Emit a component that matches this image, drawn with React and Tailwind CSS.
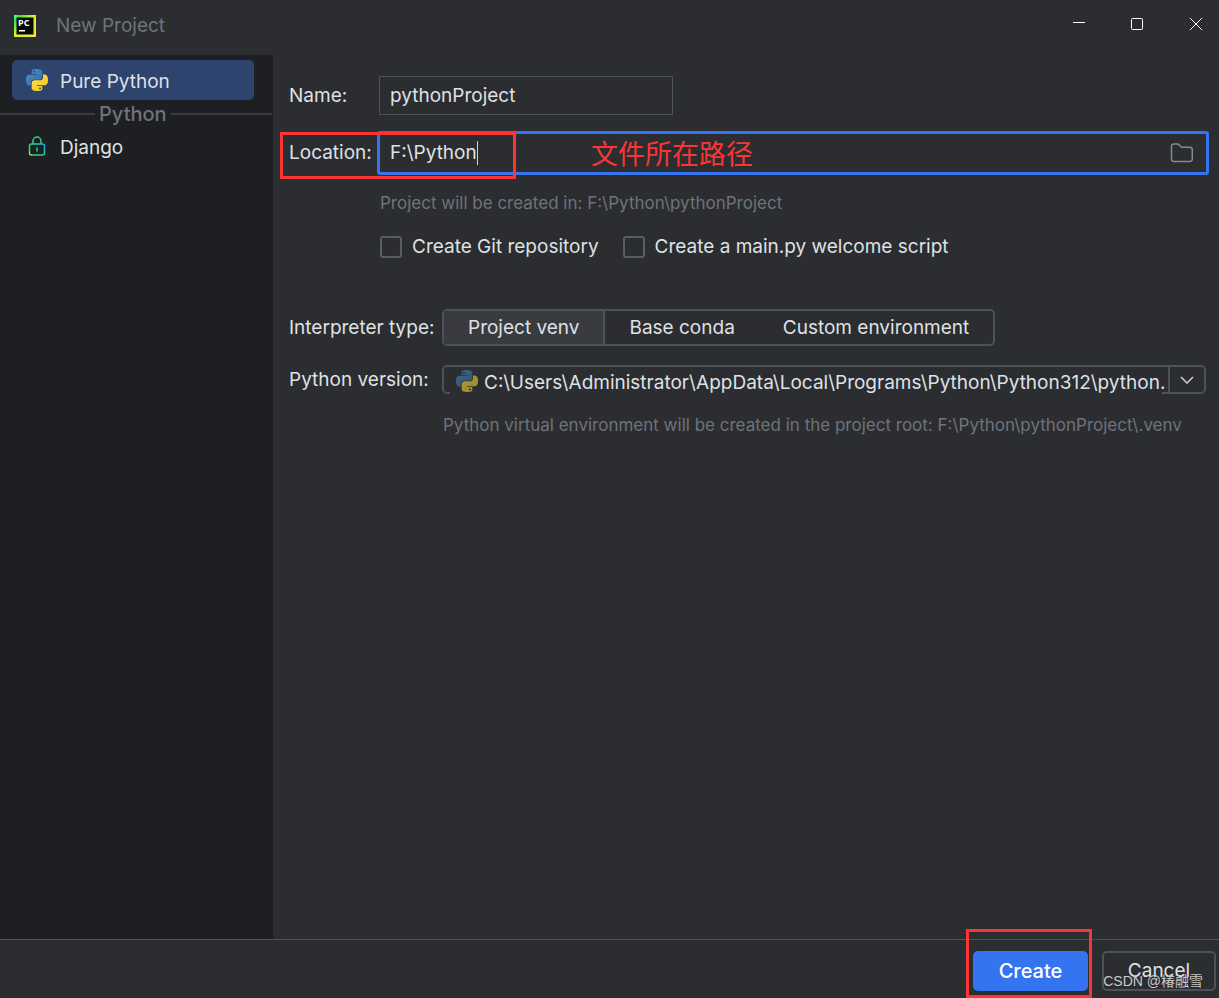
import React, { useState } from 'react';

const PythonIcon = ({ className }) => (
    <svg viewBox="0 0 24 24" className={className} aria-hidden="true">
        <defs>
            <linearGradient id="pyBlue" x1="0" y1="0" x2="1" y2="1">
                <stop offset="0" stopColor="#4b8fc7" />
                <stop offset="1" stopColor="#346c9c" />
            </linearGradient>
            <linearGradient id="pyYellow" x1="0" y1="0" x2="1" y2="1">
                <stop offset="0" stopColor="#ffdf4d" />
                <stop offset="1" stopColor="#f5c518" />
            </linearGradient>
        </defs>
        <path
            fill="url(#pyBlue)"
            d="M14.25.18l.9.2.73.26.59.3.45.32.34.34.25.34.16.33.1.3.04.26.02.2-.01.13V8.5l-.05.63-.13.55-.21.46-.26.38-.3.31-.33.25-.35.19-.35.14-.33.1-.3.07-.26.04-.21.02H8.77l-.69.05-.59.14-.5.22-.41.27-.33.32-.27.35-.2.36-.15.37-.1.35-.07.32-.04.27-.02.21v3.06H3.17l-.21-.03-.28-.07-.32-.12-.35-.18-.36-.26-.36-.36-.35-.46-.32-.59-.28-.73-.21-.88-.14-1.05-.05-1.23.06-1.22.16-1.04.24-.87.32-.71.36-.57.4-.44.42-.33.42-.24.4-.16.36-.1.32-.05.24-.01h.16l.06.01h8.16v-.83H6.18l-.01-2.75-.02-.37.05-.34.11-.31.17-.28.25-.26.31-.23.38-.2.44-.18.51-.15.58-.12.64-.1.71-.06.77-.04.84-.02 1.27.05zm-6.3 1.98l-.23.33-.08.41.08.41.23.34.33.22.41.09.41-.09.33-.22.23-.34.08-.41-.08-.41-.23-.33-.33-.22-.41-.09-.41.09z"
        />
        <path
            fill="url(#pyYellow)"
            d="M21.04 6.11l.28.06.32.12.35.18.36.27.36.35.35.47.32.59.28.73.21.88.14 1.04.05 1.23-.06 1.23-.16 1.04-.24.86-.32.71-.36.57-.4.45-.42.33-.42.24-.4.16-.36.09-.32.05-.24.02-.16-.01h-8.22v.82h5.84l.01 2.76.02.36-.05.34-.11.31-.17.29-.25.25-.31.24-.38.2-.44.17-.51.15-.58.13-.64.09-.71.07-.77.04-.84.01-1.27-.04-1.07-.14-.9-.2-.73-.25-.59-.3-.45-.33-.34-.34-.25-.34-.16-.33-.1-.3-.04-.25-.02-.2.01-.13v-5.34l.05-.64.13-.54.21-.46.26-.38.3-.32.33-.24.35-.2.35-.14.33-.1.3-.06.26-.04.21-.02.13-.01h5.84l.69-.05.59-.14.5-.21.41-.28.33-.32.27-.35.2-.36.15-.36.1-.35.07-.32.04-.28.02-.21V6.07h2.09l.14.01zm-6.47 14.25l-.23.33-.08.41.08.41.23.33.33.23.41.08.41-.08.33-.23.23-.33.08-.41-.08-.41-.23-.33-.33-.23-.41-.08-.41.08z"
        />
    </svg>
);

const PyCharmIcon = () => (
    <svg viewBox="0 0 22 22" className="size-[22px]" aria-hidden="true">
        <defs>
            <linearGradient id="pcFrame" x1="0" y1="0" x2="1" y2="1">
                <stop offset="0" stopColor="#7df5d0" />
                <stop offset="0.15" stopColor="#2be83a" />
                <stop offset="0.45" stopColor="#d4f135" />
                <stop offset="1" stopColor="#f0e62d" />
            </linearGradient>
        </defs>
        <rect width="22" height="22" fill="url(#pcFrame)" />
        <rect x="2.5" y="2.5" width="17" height="17" fill="#050805" />
        <text x="4" y="11" fill="#fff" fontSize="9" fontWeight="700" fontFamily="Open Sans, sans-serif">PC</text>
        <rect x="5" y="15" width="6" height="1.5" fill="#fff" />
    </svg>
);

const LockIcon = () => (
    <svg viewBox="0 0 18 20" fill="none" strokeWidth="1.5" className="h-5 w-[18px]" aria-hidden="true">
        <defs>
            <linearGradient id="lock" x1="0" y1="1" x2="1" y2="0.4">
                <stop offset="0" stopColor="#d8e34a" />
                <stop offset="0.2" stopColor="#21d789" />
                <stop offset="0.75" stopColor="#21d789" />
                <stop offset="1" stopColor="#14b8d4" />
            </linearGradient>
        </defs>
        <path stroke="#21d789" d="M5 8V5a4 4 0 0 1 8 0v3" />
        <rect x="1.5" y="8" width="15" height="11" rx="2" stroke="url(#lock)" />
        <path stroke="#21d789" d="M9 11.5v4" />
    </svg>
);

const FolderIcon = () => (
    <svg viewBox="0 0 24 20" fill="none" stroke="#868a91" strokeWidth="1.5" className="h-5 w-6" aria-hidden="true">
        <path d="M1.500 3.500A2.300 2.300 0 0 1 3.800 1h3.600a2 2 0 0 1 1.400.6L11.600 4.300H20a2.300 2.300 0 0 1 2.300 2.300v9.600a2.300 2.300 0 0 1-2.300 2.300H3.800a2.300 2.300 0 0 1-2.300-2.300z" />
    </svg>
);

const interpreters = ['Project venv', 'Base conda', 'Custom environment'];

const checkboxClass = 'size-[22px] appearance-none rounded-[3px] border-2 border-[#5a5d63] checked:bg-[#3574f0]';

const App = () => {
    const [name, setName] = useState('pythonProject');
    const [location, setLocation] = useState('F:\\Python');
    const [interpreter, setInterpreter] = useState('Project venv');

    return (
        <div className="relative flex min-h-screen flex-col overflow-hidden bg-[#2b2d30] font-['Inter','Noto_Sans_CJK_SC',sans-serif] text-[19px] leading-6 text-[#dfe1e5]">
            {/* Title bar */}
            <header className="flex h-[55px] items-center justify-between pr-px pb-1 pl-[14px]">
                <div className="flex items-center gap-5">
                    <PyCharmIcon />
                    <h1 className="text-[#6f737a]">New Project</h1>
                </div>
                <div className="flex items-center pb-1 text-white">
                    <button type="button" aria-label="Minimize" className="flex h-10 w-[58px] items-center justify-center">
                        <svg viewBox="0 0 12 12" className="size-3"><path d="M0 4.500h12" stroke="currentColor" /></svg>
                    </button>
                    <button type="button" aria-label="Maximize" className="flex h-10 w-[58px] items-center justify-center">
                        <svg viewBox="0 0 12 12" className="size-3"><rect x="0.5" y="0.5" width="11" height="11" rx="1" fill="none" stroke="currentColor" /></svg>
                    </button>
                    <button type="button" aria-label="Close" className="flex h-10 w-[52px] items-center justify-center pl-2">
                        <svg viewBox="0 0 12 12" className="size-3"><path d="M0 0l12 12M12 0L0 12" stroke="currentColor" /></svg>
                    </button>
                </div>
            </header>

            <div className="flex flex-1">
                {/* Project types */}
                <nav className="w-[273px] shrink-0 bg-[#1e1f22] pt-[5px]">
                    <button type="button" className="ml-3 flex h-10 w-[242px] items-center gap-3 rounded-[5px] bg-[#2e436e] pl-[14px]">
                        <PythonIcon className="size-[22px]" />
                        <span className="pt-[3px]">Pure Python</span>
                    </button>
                    <div className="flex items-center gap-1 pt-[2px] pr-px text-xl leading-6 font-medium text-[#6f737a]">
                        <span className="h-[2px] w-[95px] bg-[#393b40]" />
                        Python
                        <span className="h-[2px] flex-1 bg-[#393b40]" />
                    </div>
                    <button type="button" className="ml-3 flex h-10 w-[242px] items-center gap-[14px] pl-4">
                        <LockIcon />
                        <span className="pt-[3px]">Django</span>
                    </button>
                </nav>

                {/* Settings form */}
                <main className="min-w-0 flex-1 pr-[10px] pl-4">
                    <div className="flex items-center pt-[21px]">
                        <label htmlFor="name" className="w-[90px]">Name:</label>
                        <input
                            id="name"
                            value={name}
                            onChange={(e) => setName(e.target.value)}
                            className="h-[39px] w-[294px] border border-[#4e5157] bg-transparent px-[10px] outline-none"
                        />
                    </div>

                    <div className="relative mt-4 flex items-center">
                        <label htmlFor="location" className="w-[88px]">Location:</label>
                        <div className="flex h-11 flex-1 items-center justify-between rounded-[3px] border-3 border-[#3574f0] pr-3 pl-[10px]">
                            <div className="flex items-center">
                                <input
                                    id="location"
                                    value={location}
                                    onChange={(e) => setLocation(e.target.value)}
                                    className="field-sizing-content bg-transparent outline-none"
                                />
                                <span className="h-6 w-px bg-[#ced0d6]" />
                            </div>
                            <button type="button" aria-label="Browse"><FolderIcon /></button>
                        </div>
                        {/* Highlight and note over the location row */}
                        <div className="pointer-events-none absolute top-[1px] -left-[9px] h-[47px] w-[236px] border-3 border-[#fa3534]" />
                        <span className="pointer-events-none absolute left-[302px] pt-[3px] text-[27px] text-[#fa3534]">文件所在路径</span>
                    </div>

                    <p className="mt-4 pl-[91px] text-[17px] text-[#6f737a]">Project will be created in: F:\Python\pythonProject</p>

                    <div className="mt-5 flex gap-6 pl-[91px]">
                        <label className="flex items-center gap-[10px]">
                            <input type="checkbox" className={checkboxClass} />
                            Create Git repository
                        </label>
                        <label className="flex items-center gap-[10px]">
                            <input type="checkbox" className={checkboxClass} />
                            Create a main.py welcome script
                        </label>
                    </div>

                    <div className="mt-[50px] flex items-center">
                        <span id="interpreter-label" className="w-[153px]">Interpreter type:</span>
                        <div role="group" aria-labelledby="interpreter-label" className="flex h-[37px] rounded-[5px] border-2 border-[#4e5157]">
                            {interpreters.map((item) => (
                                <button
                                    key={item}
                                    type="button"
                                    aria-pressed={interpreter === item}
                                    onClick={() => setInterpreter(item)}
                                    className={interpreter === item ? 'border-r-2 border-[#4e5157] bg-[#393b40] px-6' : 'px-6'}
                                >
                                    {item}
                                </button>
                            ))}
                        </div>
                    </div>

                    <div className="mt-[19px] mr-[3px] flex items-center">
                        <label htmlFor="version" className="w-[153px] shrink-0">Python version:</label>
                        <div className="relative flex h-[29px] min-w-0 flex-1 rounded-[5px] border-2 border-[#4e5157]">
                            {/* The path text runs over the lower edge of the box */}
                            <span className="pointer-events-none absolute right-[42px] -bottom-[2px] left-[6px] h-[2px] bg-[#2b2d30]" />
                            <select id="version" className="relative h-8 min-w-0 flex-1 appearance-none bg-transparent pl-10 outline-none">
                                <option>C:\Users\Administrator\AppData\Local\Programs\Python\Python312\python.</option>
                            </select>
                            <span className="flex w-[36px] items-center justify-center border-l-2 border-[#4e5157]">
                                <svg viewBox="0 0 14 8" fill="none" stroke="#ced0d6" strokeWidth="1.5" className="h-2 w-[14px]"><path d="M1 1l6 6 6-6" /></svg>
                            </span>
                            <span className="pointer-events-none absolute top-[3px] left-3 opacity-60"><PythonIcon className="size-[22px]" /></span>
                        </div>
                    </div>

                    <p className="mt-[19px] pl-[154px] text-[17px] whitespace-nowrap text-[#6f737a]">Python virtual environment will be created in the project root: F:\Python\pythonProject\.venv</p>
                </main>
            </div>

            {/* Actions */}
            <footer className="flex h-[59px] justify-end gap-[14px] border-t border-[#4e5157] pt-[11px] pr-[3px]">
                <div className="relative">
                    <button type="button" className="h-10 w-[115px] rounded-[5px] bg-[#3574f0] text-xl font-medium text-white">Create</button>
                    <div className="pointer-events-none absolute -top-[22px] -left-[7px] h-[69px] w-[126px] border-3 border-[#fa3534]" />
                </div>
                <button type="button" className="h-10 w-[114px] rounded-[5px] border-2 border-[#4e5157]">Cancel</button>
            </footer>

            <span className="pointer-events-none absolute right-4 bottom-[5px] font-['Liberation_Sans','Noto_Sans_CJK_SC',sans-serif] text-[14px] text-[#c8c9cb]">CSDN @椿融雪</span>
        </div>
    );
};

export default App;
